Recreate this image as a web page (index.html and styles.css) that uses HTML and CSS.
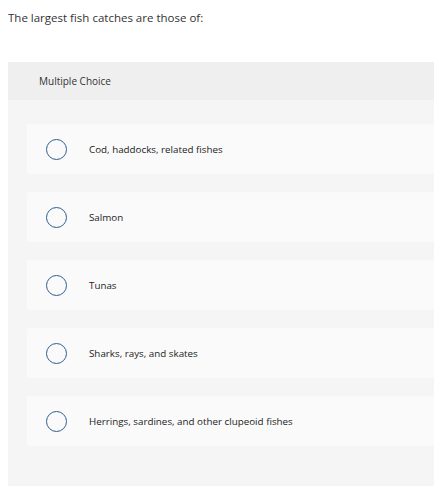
FILE: index.html
```html
<!DOCTYPE html>
<html>
<head>
<meta charset="utf-8">
<link rel="stylesheet" href="styles.css">
</head>
<body>
<p class="question">The largest fish catches are those of:</p>
<section class="panel">
  <div class="panel-header">Multiple Choice</div>
  <div class="panel-body">
    <div class="option"><span class="radio"></span><span class="label">Cod, haddocks, related fishes</span></div>
    <div class="option"><span class="radio"></span><span class="label">Salmon</span></div>
    <div class="option"><span class="radio"></span><span class="label">Tunas</span></div>
    <div class="option"><span class="radio"></span><span class="label">Sharks, rays, and skates</span></div>
    <div class="option"><span class="radio"></span><span class="label">Herrings, sardines, and other clupeoid fishes</span></div>
  </div>
</section>
</body>
</html>
```
FILE: styles.css
```css
html, body { background: #fff; }
body {
  margin: 0 0 0 8px;
  font-family: "Open Sans", Lato, sans-serif;
  color: #222;
}
.question {
  margin: 0;
  padding-top: 11px;
  height: 50px;
  box-sizing: border-box;
  font-size: 11.5px;
  line-height: 14px;
  color: #333;
}
.panel {
  margin-top: 12px;
  background: #f5f5f5;
}
.panel-header {
  height: 38px;
  background: #efefef;
  display: flex;
  align-items: center;
  padding-left: 31px;
  font-size: 10px;
  color: #333;
}
.panel-body {
  padding: 24px 0 40px 19px;
  display: flex;
  flex-direction: column;
  gap: 18px;
}
.option {
  height: 50px;
  background: #fafafa;
  border-radius: 2px 0 0 2px;
  display: flex;
  align-items: center;
  padding-left: 19px;
}
.radio {
  width: 19px;
  height: 19px;
  border: 1.5px solid #2d5f8f;
  border-radius: 50%;
  flex: none;
}
.label {
  margin-left: 22px;
  font-size: 9.8px;
  color: #222;
}
```
